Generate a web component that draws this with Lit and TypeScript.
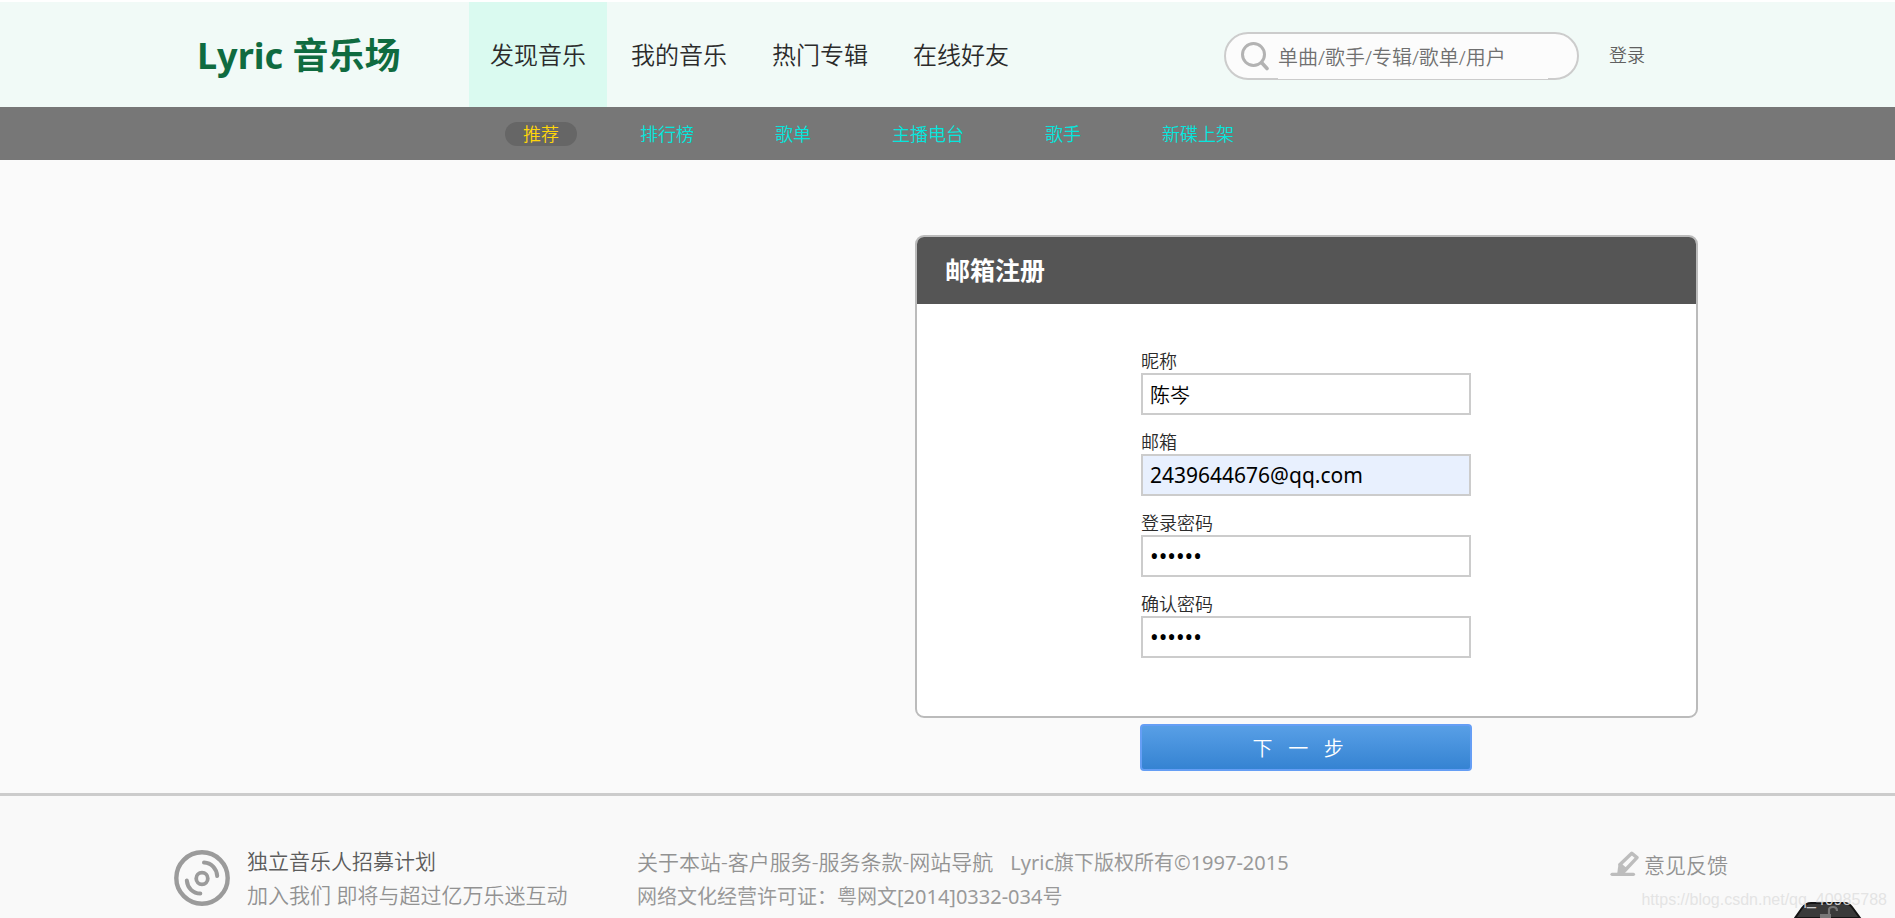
import { LitElement, html, css, svg } from "lit";
import { customElement, state } from "lit/decorators.js";
import { classMap } from "lit/directives/class-map.js";

const NAV = ["发现音乐", "我的音乐", "热门专辑", "在线好友"];
const SUBNAV = ["推荐", "排行榜", "歌单", "主播电台", "歌手", "新碟上架"];
const FIELDS = [
  { id: "nickname", label: "昵称", type: "text", value: "陈岑", filled: false },
  { id: "email", label: "邮箱", type: "text", value: "2439644676@qq.com", filled: true },
  { id: "password", label: "登录密码", type: "password", value: "123456", filled: false },
  { id: "confirm", label: "确认密码", type: "password", value: "123456", filled: false },
];

const searchIcon = html`<svg class="icon" width="30" height="30" viewBox="0 0 30 30" aria-hidden="true">
  ${svg`<circle cx="13.5" cy="13.5" r="11" fill="none" stroke="#b3b3b3" stroke-width="3"/>
  <path d="M21.5 21.5 27 27.5" stroke="#b3b3b3" stroke-width="3.6" stroke-linecap="round"/>`}
</svg>`;

const discIcon = html`<svg class="icon" width="56" height="56" viewBox="0 0 56 56" aria-hidden="true">
  ${svg`<g fill="none" stroke="#9b9b9b" stroke-linecap="round">
    <circle cx="28" cy="28" r="25.7" stroke-width="4.4"/>
    <circle cx="28" cy="28.5" r="5.8" stroke-width="3.8"/>
    <path d="M30 12.6C37.5 13 42.6 18.5 43.2 26" stroke-width="4"/>
    <path d="M12.800 30.5C13.5 38 19 43.5 26.3 43.5" stroke-width="4"/>
  </g>`}
</svg>`;

const pencilIcon = html`<svg class="icon" width="30" height="26" viewBox="0 0 30 26" aria-hidden="true">
  ${svg`<path d="M2 23.3H23.5" stroke="#bdbdbd" stroke-width="3.2" stroke-linecap="round"/>
  <path d="M10 13.5 21.800 2.2 27 6.6 15.800 18.5Z" fill="none" stroke="#bdbdbd" stroke-width="3.4" stroke-linejoin="round"/>
  <path d="M8.600 12.5 17 19.5 15 22 7 24Z" fill="#bdbdbd"/>`}
</svg>`;

@customElement("app-root")
export class AppRoot extends LitElement {
  @state() private activeNav = 0;
  @state() private activeSub = 0;

  static styles = css`
    :host {
      display: flex;
      flex-direction: column;
      position: relative;
      min-height: 100vh;
      overflow: hidden;
      background: #fafafa;
      color: #2b2b2b;
      font-family: "Noto Sans", "Noto Sans CJK SC", sans-serif;
      font-size: 18px;
      line-height: 24px;
      font-weight: 350;
    }
    * { box-sizing: border-box; }
    a { color: inherit; text-decoration: none; }
    h1, h2, p { margin: 0; }
    input, button { font: inherit; }
    .icon { display: block; flex: none; }
    .wrap {
      width: 100%;
      max-width: 1595px;
      margin: 0 auto;
      display: flex;
    }
    .top { background: #f1faf7; border-top: 2px solid #fff; }
    .top .wrap { height: 105px; align-items: center; padding: 0 100px 0 47px; }
    .logo {
      width: 272px;
      padding-top: 3px;
      font-size: 36px;
      line-height: 48px;
      font-weight: 700;
      color: #0f6b40;
      white-space: nowrap;
    }
    .nav { display: flex; gap: 3px; align-self: stretch; }
    .nav a {
      display: flex;
      align-items: center;
      padding: 0 21px;
      font-size: 24px;
      white-space: nowrap;
    }
    .nav a.on { background: #dafaf0; }
    .search {
      display: flex;
      align-items: center;
      width: 355px;
      height: 48px;
      margin: 2px 0 0 auto;
      padding-left: 14px;
      border: 2px solid #ccc;
      border-radius: 24px;
      background: #fcfcfc;
    }
    .search input {
      width: 270px;
      height: 45px;
      margin: 0 0 0 8px;
      align-self: flex-start;
      padding: 2px 0 0;
      border: 0;
      outline: 0;
      background: #fcfcfc;
      font-size: 20px;
    }
    .search input::placeholder { color: #707070; }
    .login { margin-left: 30px; color: #606060; }
    .sub { background: #777; }
    .sub .wrap { height: 53px; align-items: center; gap: 45px; padding-left: 355px; }
    .sub a {
      padding: 0 18px;
      border-radius: 12px;
      color: #06e6de;
      white-space: nowrap;
    }
    .sub a.on { background: #666; color: #ffd60a; }
    main.wrap { justify-content: flex-end; padding: 75px 47px 22px; }
    .register { width: 783px; }
    .card {
      border: 2px solid #bbb;
      border-radius: 9px;
      background: #fff;
      overflow: hidden;
    }
    .card h2 {
      padding: 16px 28px 17px;
      background: #555;
      color: #fff;
      font-size: 25px;
      line-height: 34px;
      font-weight: 700;
    }
    .fields {
      display: grid;
      gap: 15px;
      justify-content: center;
      padding: 45px 1px 58px 0;
    }
    .field { display: grid; width: 330px; }
    .field input {
      width: 330px;
      height: 42px;
      padding: 0 7px;
      border: 2px solid #ccc;
      outline: 0;
      background: #fff;
      color: #000;
      font-size: 20px;
    }
    .field input[type="password"] { font-size: 23px; font-weight: 400; }
    .field input.filled { background: #e8f0fe; font-size: 21px; font-weight: 400; }
    .next {
      display: block;
      width: 332px;
      height: 47px;
      margin: 6px 0 0 225px;
      padding: 2px 0 0;
      border: 2px solid #659ef5;
      border-radius: 4px;
      background: linear-gradient(#589fe6, #3583d2);
      color: #fff;
      font-size: 20px;
    }
    footer {
      flex: 1;
      border-top: 3px solid #ccc;
      background: #f9f9f9;
      color: #929292;
      font-size: 21px;
      line-height: 34px;
    }
    footer .wrap { padding: 48px 17px 3px 24px; }
    .join { display: flex; width: 463px; gap: 17px; white-space: nowrap; }
    .join .icon { margin-top: 6px; }
    .join .lead { display: block; color: #5c5c5c; }
    .about { padding-top: 1px; white-space: nowrap; }
    .legal { font-size: 20px; font-weight: 400; color: #999; }
    .legal.gap { margin-left: 17px; }
    .feedback { display: flex; gap: 4px; margin-left: auto; padding-top: 4px; height: 38px; }
    .feedback .icon { margin-top: 3px; }
    .dock { position: absolute; right: 25px; bottom: 0; }
    .mark {
      position: absolute;
      right: 8px;
      bottom: 8px;
      font-family: "Liberation Sans", sans-serif;
      font-size: 16px;
      line-height: 20px;
      font-weight: 400;
      color: rgba(225, 225, 225, 0.9);
    }
  `;

  render() {
    return html`
      <header class="top">
        <div class="wrap">
          <h1 class="logo">Lyric 音乐场</h1>
          <nav class="nav">
            ${NAV.map((t, i) => html`<a href="#" class=${classMap({ on: i === this.activeNav })}
              @click=${(e: Event) => { e.preventDefault(); this.activeNav = i; }}>${t}</a>`)}
          </nav>
          <form class="search">
            ${searchIcon}
            <input type="text" aria-label="搜索" placeholder="单曲/歌手/专辑/歌单/用户">
          </form>
          <a class="login" href="#">登录</a>
        </div>
      </header>
      <nav class="sub">
        <div class="wrap">
          ${SUBNAV.map((t, i) => html`<a href="#" class=${classMap({ on: i === this.activeSub })}
            @click=${(e: Event) => { e.preventDefault(); this.activeSub = i; }}>${t}</a>`)}
        </div>
      </nav>
      <main class="wrap">
        <form class="register" @submit=${(e: Event) => e.preventDefault()}>
          <section class="card">
            <h2>邮箱注册</h2>
            <div class="fields">
              ${FIELDS.map((f) => html`<div class="field">
                <label for=${f.id}>${f.label}</label>
                <input id=${f.id} type=${f.type} .value=${f.value} class=${classMap({ filled: f.filled })}>
              </div>`)}
            </div>
          </section>
          <button class="next" type="submit">下&nbsp;&nbsp;&nbsp;一&nbsp;&nbsp;&nbsp;步&nbsp;&nbsp;&nbsp;</button>
        </form>
      </main>
      <footer>
        <div class="wrap">
          <a class="join" href="#">
            ${discIcon}
            <span><span class="lead">独立音乐人招募计划</span>加入我们 即将与超过亿万乐迷互动</span>
          </a>
          <div class="about">
            <p><a href="#">关于本站</a>-<a href="#">客户服务</a>-<a href="#">服务条款</a>-<a href="#">网站导航</a><span class="legal gap">Lyric旗下版权所有©1997-2015</span></p>
            <p class="legal">网络文化经营许可证：粤网文[2014]0332-034号</p>
          </div>
          <a class="feedback" href="#">${pencilIcon}意见反馈</a>
        </div>
      </footer>
      <svg class="dock" width="86" height="16" viewBox="0 0 86 16" aria-hidden="true">
        ${svg`<path d="M11 16 18 6Q22 1 27 1H60Q65 1 68 5L76 16Z" fill="#3a3a3a" stroke="#151515" stroke-width="2"/>
        <path d="M36 12H47V16H36Z" fill="#777"/>
        <path d="M45 12V8Q45 5 49 5Q53 5 53 9" fill="none" stroke="#777" stroke-width="2.2"/>`}
      </svg>
      <span class="mark">https://blog.csdn.net/qq_40985788</span>
    `;
  }
}
